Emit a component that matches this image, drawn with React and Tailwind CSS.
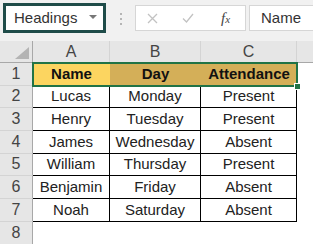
import React from 'react';

const rows = [
  ['Lucas', 'Monday', 'Present'],
  ['Henry', 'Tuesday', 'Present'],
  ['James', 'Wednesday', 'Absent'],
  ['William', 'Thursday', 'Present'],
  ['Benjamin', 'Friday', 'Absent'],
  ['Noah', 'Saturday', 'Absent'],
];

const font = { fontFamily: '"Liberation Sans", Arial, sans-serif' };

function Toolbar() {
  return (
    <div className="flex h-[41px] items-start bg-[#f1f1f1] pt-[3px]">
      {/* name box */}
      <div className="ml-[3px] flex h-[30px] w-[103px] items-center justify-between border-[3px] border-[#1f4c49] bg-white pl-[8px] pr-[6px]">
        <span className="text-[15px] text-[#333]">Headings</span>
        <span className="mt-[-2px] border-x-[4px] border-t-[4px] border-x-transparent border-t-[#777]" />
      </div>
      {/* grip dots */}
      <div className="ml-[14px] mt-[10px] flex flex-col gap-[3px]">
        <span className="h-[2px] w-[2px] bg-[#b5b5b5]" />
        <span className="h-[2px] w-[2px] bg-[#b5b5b5]" />
        <span className="h-[2px] w-[2px] bg-[#b5b5b5]" />
      </div>
      {/* cancel / enter / function */}
      <div className="ml-[13px] mt-[2px] flex h-[26px] w-[111px] items-center border border-[#d6d6d6] bg-white">
        <svg className="ml-[11px]" width="11" height="11" viewBox="0 0 11 11">
          <path d="M1 1 L10 10 M10 1 L1 10" stroke="#c2c2c2" strokeWidth="1.3" />
        </svg>
        <svg className="ml-[24px]" width="12" height="10" viewBox="0 0 12 10">
          <path d="M1 5.5 L4.5 9 L11 1" stroke="#c2c2c2" strokeWidth="1.3" fill="none" />
        </svg>
        <span
          className="ml-[27px] text-[15px] italic text-[#444]"
          style={{ fontFamily: '"Liberation Serif", serif' }}
        >
          f<span className="text-[11px]">x</span>
        </span>
      </div>
      {/* formula input */}
      <div className="ml-[3px] mt-[2px] flex h-[26px] flex-1 items-center border border-r-0 border-[#d6d6d6] bg-white pl-[11px]">
        <span className="text-[15px] text-[#333]">Name</span>
      </div>
    </div>
  );
}

function Sheet() {
  const head = 'flex items-center justify-center bg-[#e6e6e6] text-[16px] text-[#444]';
  const cell = 'flex items-center justify-center border-b border-r border-black bg-white text-[15px] text-[#222]';
  return (
    <div className="relative grid grid-cols-[33px_77px_91px_96px_1fr] grid-rows-[22px_repeat(8,22.67px)]">
      {/* select-all corner */}
      <div className="relative border-b border-r border-[#a8a8a8] bg-[#e6e6e6]">
        <svg className="absolute bottom-[3px] right-[3px]" width="14" height="12" viewBox="0 0 14 12">
          <path d="M14 0 L14 12 L0 12 Z" fill="#b4b4b4" />
        </svg>
      </div>
      <div className={`${head} border-b border-r border-b-[#a8a8a8] border-r-[#d4d4d4]`}>A</div>
      <div className={`${head} border-b border-r border-b-[#a8a8a8] border-r-[#d4d4d4]`}>B</div>
      <div className={`${head} border-b border-r border-b-[#a8a8a8] border-r-[#d4d4d4]`}>C</div>
      <div className={`${head} border-b border-b-[#a8a8a8]`} />

      {/* row 1: column titles */}
      <div className={`${head} border-b border-r border-b-[#d4d4d4] border-r-[#a8a8a8] text-[#333]`}>1</div>
      <div className="flex items-center justify-center bg-[#fcd560] text-[15px] font-bold text-[#111]">Name</div>
      <div className="flex items-center justify-center bg-[#d4af58] text-[15px] font-bold text-[#111]">Day</div>
      <div className="flex items-center justify-center bg-[#d4af58] text-[15px] font-bold text-[#111]">Attendance</div>
      <div className="bg-white" />

      {rows.map((r, i) => (
        <React.Fragment key={r[0]}>
          <div className={`${head} border-b border-r border-b-[#d4d4d4] border-r-[#a8a8a8] text-[#333]`}>{i + 2}</div>
          <div className={cell}>{r[0]}</div>
          <div className={cell}>{r[1]}</div>
          <div className={cell}>{r[2]}</div>
          <div className="bg-white" />
        </React.Fragment>
      ))}

      <div className={`${head} border-r border-r-[#a8a8a8] text-[#333]`}>8</div>
      <div className="col-span-4 bg-white" />

      {/* selection frame over A1:C1 */}
      <div className="pointer-events-none absolute left-[32px] top-[21px] h-[24.67px] w-[266px] border-2 border-[#217346]" />
      <div className="pointer-events-none absolute left-[294px] top-[42px] h-[7px] w-[7px] border border-white bg-[#217346]" />
    </div>
  );
}

export default function App() {
  return (
    <div className="h-[248px] w-[313px] overflow-hidden bg-white" style={font}>
      <Toolbar />
      <Sheet />
    </div>
  );
}
